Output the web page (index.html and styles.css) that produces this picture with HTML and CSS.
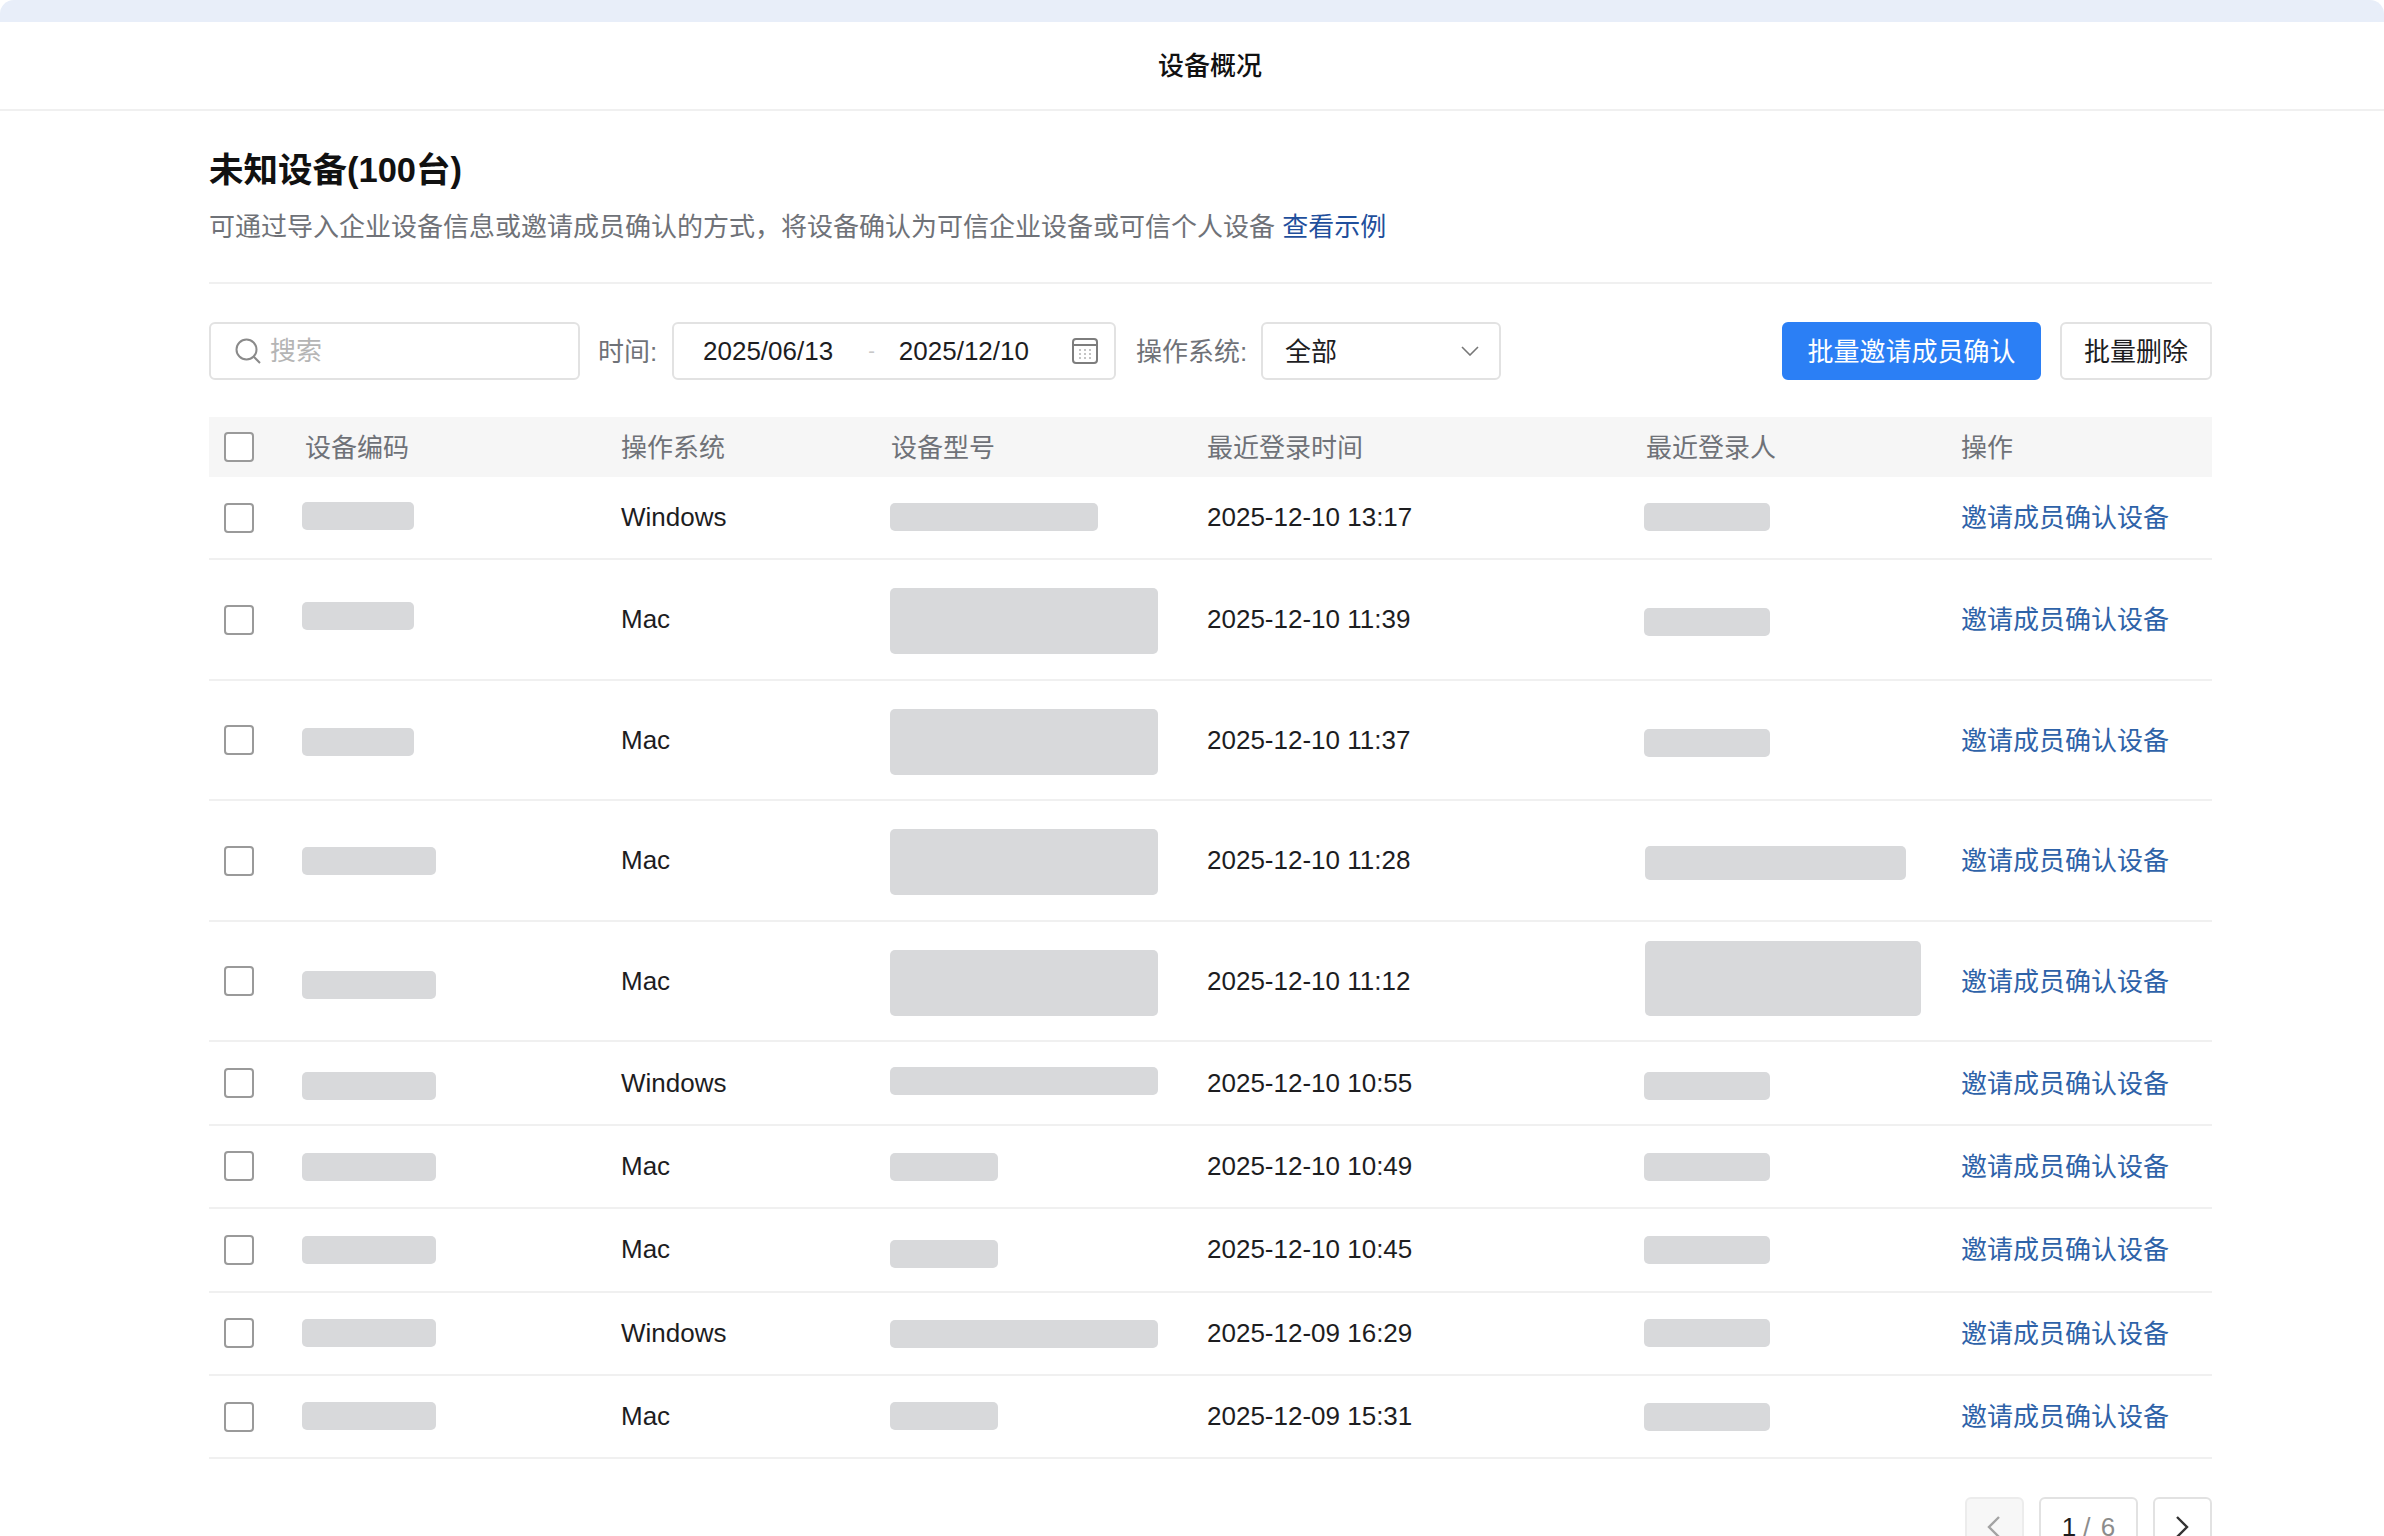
FILE: index.html
```html
<!DOCTYPE html>
<html lang="zh-CN">
<head>
    <meta charset="UTF-8">
    <title>设备概况</title>
    <link rel="stylesheet" href="styles.css">
</head>
<body>
    <div class="top-band"></div>
    <header class="page-header">
        <h1 class="page-title">设备概况</h1>
    </header>
    <main class="content">
        <section class="intro">
            <h2 class="intro-title">未知设备(100台)</h2>
            <p class="intro-text">可通过导入企业设备信息或邀请成员确认的方式，将设备确认为可信企业设备或可信个人设备 <a href="#" class="intro-link">查看示例</a></p>
        </section>

        <section class="toolbar">
            <div class="box search-box">
                <svg class="search-icon" viewBox="0 0 28 28" fill="none" stroke="#8a8a8a" stroke-width="2"><circle cx="12.5" cy="12.5" r="10"/><path d="M19.8 19.8 26 26"/></svg>
                <span class="search-text">搜索</span>
            </div>
            <span class="filter-label time-label">时间:</span>
            <div class="box date-box">
                <span class="date-start">2025/06/13</span>
                <span class="date-dash">-</span>
                <span class="date-end">2025/12/10</span>
                <svg class="date-icon" viewBox="0 0 26 26" fill="none"><rect x="1" y="1" width="24" height="24" rx="3" stroke="#7d7d7d" stroke-width="2"/><path d="M1 7h24" stroke="#7d7d7d" stroke-width="2"/><path d="M7 12h12M7 16h12M7 20h12" stroke="#c4c4c4" stroke-width="2" stroke-dasharray="2 3"/></svg>
            </div>
            <span class="filter-label os-label">操作系统:</span>
            <div class="box select-box">
                <span class="select-text">全部</span>
                <svg class="select-icon" viewBox="0 0 18 10" fill="none" stroke="#777" stroke-width="1.6"><path d="M1 1l8 8 8-8"/></svg>
            </div>
            <button type="button" class="btn btn-primary">批量邀请成员确认</button>
            <button type="button" class="btn">批量删除</button>
        </section>

        <section class="table">
            <div class="row row-head">
                <div class="cell"><span class="check"></span></div>
                <div class="cell head-text head-first">设备编码</div>
                <div class="cell head-text">操作系统</div>
                <div class="cell head-text head-nudge">设备型号</div>
                <div class="cell head-text">最近登录时间</div>
                <div class="cell head-text head-nudge">最近登录人</div>
                <div class="cell head-text">操作</div>
            </div>

            <div class="row">
                <div class="cell"><span class="check"></span></div>
                <div class="cell"><span class="mask w-112 dy-n2"></span></div>
                <div class="cell">Windows</div>
                <div class="cell"><span class="mask w-208 dy-n1"></span></div>
                <div class="cell">2025-12-10 13:17</div>
                <div class="cell"><span class="mask w-126 dy-n1"></span></div>
                <div class="cell"><a href="#" class="row-link">邀请成员确认设备</a></div>
            </div>
            <div class="row row-tall">
                <div class="cell"><span class="check"></span></div>
                <div class="cell"><span class="mask w-112 dy-n4"></span></div>
                <div class="cell">Mac</div>
                <div class="cell"><span class="mask w-268 tall dy-1"></span></div>
                <div class="cell">2025-12-10 11:39</div>
                <div class="cell"><span class="mask w-126 dy-2"></span></div>
                <div class="cell"><a href="#" class="row-link">邀请成员确认设备</a></div>
            </div>
            <div class="row row-tall">
                <div class="cell"><span class="check"></span></div>
                <div class="cell"><span class="mask w-112 dy-2"></span></div>
                <div class="cell">Mac</div>
                <div class="cell"><span class="mask w-268 tall dy-2"></span></div>
                <div class="cell">2025-12-10 11:37</div>
                <div class="cell"><span class="mask w-126 dy-3"></span></div>
                <div class="cell"><a href="#" class="row-link">邀请成员确认设备</a></div>
            </div>
            <div class="row row-tall">
                <div class="cell"><span class="check"></span></div>
                <div class="cell"><span class="mask w-134"></span></div>
                <div class="cell">Mac</div>
                <div class="cell"><span class="mask w-268 tall dy-1"></span></div>
                <div class="cell">2025-12-10 11:28</div>
                <div class="cell"><span class="mask w-261 mid dy-2"></span></div>
                <div class="cell"><a href="#" class="row-link">邀请成员确认设备</a></div>
            </div>
            <div class="row row-tall">
                <div class="cell"><span class="check"></span></div>
                <div class="cell"><span class="mask w-134 dy-4"></span></div>
                <div class="cell">Mac</div>
                <div class="cell"><span class="mask w-268 tall dy-2"></span></div>
                <div class="cell">2025-12-10 11:12</div>
                <div class="cell"><span class="mask w-276 tallest dy-n3"></span></div>
                <div class="cell"><a href="#" class="row-link">邀请成员确认设备</a></div>
            </div>
            <div class="row">
                <div class="cell"><span class="check"></span></div>
                <div class="cell"><span class="mask w-134 dy-3"></span></div>
                <div class="cell">Windows</div>
                <div class="cell"><span class="mask w-268 dy-n2"></span></div>
                <div class="cell">2025-12-10 10:55</div>
                <div class="cell"><span class="mask w-126 dy-3"></span></div>
                <div class="cell"><a href="#" class="row-link">邀请成员确认设备</a></div>
            </div>
            <div class="row">
                <div class="cell"><span class="check"></span></div>
                <div class="cell"><span class="mask w-134 dy-1"></span></div>
                <div class="cell">Mac</div>
                <div class="cell"><span class="mask w-108 dy-1"></span></div>
                <div class="cell">2025-12-10 10:49</div>
                <div class="cell"><span class="mask w-126 dy-1"></span></div>
                <div class="cell"><a href="#" class="row-link">邀请成员确认设备</a></div>
            </div>
            <div class="row">
                <div class="cell"><span class="check"></span></div>
                <div class="cell"><span class="mask w-134"></span></div>
                <div class="cell">Mac</div>
                <div class="cell"><span class="mask w-108 dy-4"></span></div>
                <div class="cell">2025-12-10 10:45</div>
                <div class="cell"><span class="mask w-126"></span></div>
                <div class="cell"><a href="#" class="row-link">邀请成员确认设备</a></div>
            </div>
            <div class="row">
                <div class="cell"><span class="check"></span></div>
                <div class="cell"><span class="mask w-134"></span></div>
                <div class="cell">Windows</div>
                <div class="cell"><span class="mask w-268 dy-1"></span></div>
                <div class="cell">2025-12-09 16:29</div>
                <div class="cell"><span class="mask w-126"></span></div>
                <div class="cell"><a href="#" class="row-link">邀请成员确认设备</a></div>
            </div>
            <div class="row">
                <div class="cell"><span class="check"></span></div>
                <div class="cell"><span class="mask w-134 dy-n1"></span></div>
                <div class="cell">Mac</div>
                <div class="cell"><span class="mask w-108 dy-n1"></span></div>
                <div class="cell">2025-12-09 15:31</div>
                <div class="cell"><span class="mask w-126"></span></div>
                <div class="cell"><a href="#" class="row-link">邀请成员确认设备</a></div>
            </div>
        </section>

        <nav class="pager">
            <button type="button" class="page-btn page-btn-off">
                <svg class="page-arrow" viewBox="0 0 14 24" fill="none" stroke="#a3a3a3" stroke-width="2.4"><path d="M12 2 2 12l10 10"/></svg>
            </button>
            <span class="page-num"><b>1</b> / 6</span>
            <button type="button" class="page-btn">
                <svg class="page-arrow" viewBox="0 0 14 24" fill="none" stroke="#333" stroke-width="2.4"><path d="M2 2l10 10L2 22"/></svg>
            </button>
        </nav>
    </main>
</body>
</html>
```

FILE: styles.css
```css
/* Global */
html, body {
    margin: 0;
    padding: 0;
    height: 1536px;
    overflow: hidden;
}

body {
    background-color: #fff;
    color: #1d1d1f;
    font-family: "Liberation Sans", "Noto Sans CJK SC", sans-serif;
    font-size: 26px;
}

a {
    text-decoration: none;
}

/* Header */
.top-band {
    height: 22px;
    background-color: #e8eef9;
    border-radius: 14px 14px 0 0;
}

.page-header {
    height: 87px;
    box-sizing: content-box;
    padding: 0 0 0 36px;
    display: flex;
    align-items: center;
    justify-content: center;
    border-bottom: 2px solid #f0f0f0;
}

.page-title {
    margin: 0 0 5px;
    font-size: 26px;
    font-weight: 500;
    color: #111;
}

/* Content */
.content {
    padding: 0 172px 0 209px;
}

.intro {
    height: 173px;
    box-sizing: border-box;
    padding-top: 36px;
    border-bottom: 2px solid #f0f0f0;
}

.intro-title {
    margin: 0;
    font-size: 34.5px;
    line-height: 46px;
    font-weight: 700;
    color: #111;
}

.intro-text {
    margin: 11px 0 0;
    line-height: 46px;
    color: #6f7278;
}

.intro-link {
    color: #1f4f9c;
}

/* Toolbar */
.toolbar {
    display: flex;
    align-items: center;
    height: 58px;
    margin-top: 38px;
}

.box {
    height: 58px;
    box-sizing: border-box;
    display: flex;
    align-items: center;
    background-color: #fff;
    border: 2px solid #e2e2e2;
    border-radius: 6px;
}

.search-box {
    width: 371px;
    padding-left: 23px;
}

.search-icon {
    width: 28px;
    height: 28px;
}

.search-text {
    margin: -5px 0 0 8px;
    color: #b5b5b5;
}

.filter-label {
    margin-top: -4px;
    color: #6f7278;
    white-space: nowrap;
}

.time-label {
    width: 56px;
    margin-left: 18px;
    margin-right: 18px;
}

.os-label {
    width: 104px;
    margin-left: 20px;
    margin-right: 21px;
}

.date-box {
    width: 444px;
    padding-left: 29px;
}

.date-dash {
    margin: 0 24px 0 35px;
    color: #c8c8c8;
    font-size: 20px;
}

.date-icon {
    width: 26px;
    height: 26px;
    margin-left: auto;
    margin-right: 16px;
}

.select-box {
    width: 240px;
    padding: 0 20px 0 22px;
    justify-content: space-between;
}

.select-text {
    margin-top: -4px;
}

.select-icon {
    width: 18px;
    height: 10px;
}

.btn {
    height: 58px;
    padding: 0 22px 4px;
    background-color: #fff;
    border: 2px solid #e2e2e2;
    border-radius: 6px;
    font: inherit;
    color: #1d1d1f;
}

.btn-primary {
    width: 259px;
    margin-left: auto;
    margin-right: 19px;
    padding: 0 0 4px;
    background-color: #2b7ff5;
    border-color: #2b7ff5;
    color: #fff;
}

/* Table */
.table {
    margin-top: 37px;
}

.row {
    display: grid;
    grid-template-columns: 93px 319px 268px 318px 437px 317px 251px;
    height: 83.4px;
    box-sizing: border-box;
    border-bottom: 2px solid #f0f0f0;
}

.row-tall {
    height: 120.5px;
}

.row-head {
    height: 60px;
    background-color: #f6f6f6;
    border-bottom: 0;
    color: #6f7278;
}

.cell {
    display: flex;
    align-items: center;
    white-space: nowrap;
}

.head-text {
    padding-bottom: 4px;
}

.head-first {
    padding-left: 3px;
}

.head-nudge {
    padding-left: 2px;
}

.check {
    width: 30px;
    height: 30px;
    margin-left: 15px;
    box-sizing: border-box;
    background-color: #fff;
    border: 2px solid #9a9a9a;
    border-radius: 4px;
}

.row-link {
    margin-top: -4px;
    color: #2e62a8;
}

/* Blurred-out values */
.mask {
    display: block;
    height: 28px;
    background-color: #d8d9db;
    border-radius: 5px;
}

.mask.mid { height: 34px; }
.mask.tall { height: 66px; }
.mask.tallest { height: 75px; }

.w-108 { width: 108px; margin-left: 1px; }
.w-112 { width: 112px; }
.w-126 { width: 126px; }
.w-134 { width: 134px; }
.w-208 { width: 208px; margin-left: 1px; }
.w-261 { width: 261px; margin-left: 1px; }
.w-268 { width: 268px; margin-left: 1px; }
.w-276 { width: 276px; margin-left: 1px; }

.dy-n4 { margin-top: -8px; }
.dy-n3 { margin-top: -6px; }
.dy-n2 { margin-top: -4px; }
.dy-n1 { margin-top: -2px; }
.dy-1 { margin-top: 2px; }
.dy-2 { margin-top: 4px; }
.dy-3 { margin-top: 6px; }
.dy-4 { margin-top: 8px; }

/* Pagination */
.pager {
    display: flex;
    justify-content: flex-end;
    gap: 15px;
    margin-top: 38px;
}

.page-btn,
.page-num {
    height: 60px;
    box-sizing: border-box;
    display: flex;
    align-items: center;
    justify-content: center;
    background-color: #fff;
    border: 2px solid #e2e2e2;
    border-radius: 6px;
}

.page-btn {
    width: 59px;
    padding: 0 2px 0 0;
}

.page-btn-off {
    background-color: #f7f7f7;
    border-color: #ececec;
}

.page-arrow {
    width: 14px;
    height: 24px;
}

.page-num {
    width: 99px;
    gap: 7px;
    color: #8c8c8c;
    word-spacing: 3px;
}

.page-num b {
    font-weight: 400;
    color: #1d1d1f;
}
```
